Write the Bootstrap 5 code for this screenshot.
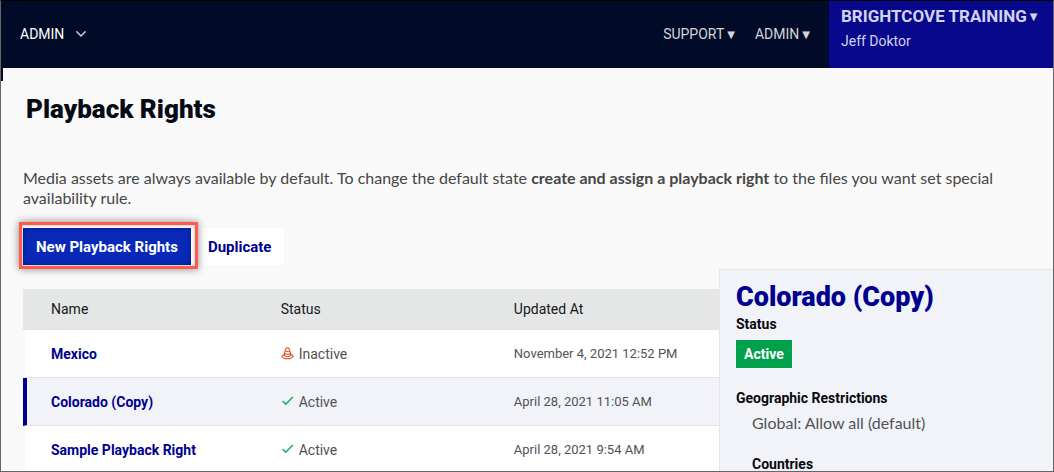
<!DOCTYPE html>
<html lang="en">
<head>
<meta charset="utf-8">
<meta name="viewport" content="width=device-width, initial-scale=1">
<title>Playback Rights</title>
<link href="https://cdn.jsdelivr.net/npm/bootstrap@5.3.0/dist/css/bootstrap.min.css" rel="stylesheet">
<style>
  :root { --navy: #010b27; --brand: #08088c; --link: #00008f; --panel: #f2f3f9; --line: #e3e4e8; }
  body { font-family: Roboto, "Liberation Sans", sans-serif; font-size: 14px; line-height: 20px; color: #505356; background: #f9f9f9; }
  .app-frame { height: 100vh; border: 1px solid #666; border-top-color: #000; }
  .topbar { background: var(--navy); height: 67px; margin: 0 -1px; }
  .menu-btn { background: none; border: 0; padding: 0 0 2px; color: #d3d5db; line-height: 20px; }
  .module-btn { color: #fff; margin-left: 20px; gap: 12px; }
  .top-links { gap: 20px; margin-right: 19px; }
  .caret { font-family: "DejaVu Sans", sans-serif; font-size: 10px; line-height: 10px; margin-left: 3px; vertical-align: 1px; }
  .account { width: 225px; background: var(--brand); padding: 5px 12px; color: #d3d3ee; }
  .account .menu-btn { font-size: 17px; color: #d3d3ee; }
  .account .caret { vertical-align: 2px; }
  .account-user { margin-top: 3px; }
  .rail-stub { width: 3px; height: 13px; margin-left: -1px; background: var(--navy); }
  .page-head { padding: 0 22px; margin-top: 12px; }
  .page-title { font-size: 26px; font-weight: 900; line-height: 32px; color: #050a14; margin: 0 0 43px 3px; }
  .intro { font-family: Lato, sans-serif; font-size: 16px; line-height: 20px; color: #464646; margin: 0 0 20px; }
  .act { border: 0; border-radius: 0; font-size: 15px; font-weight: 700; line-height: 20px; padding: 8px 13px; height: 37px; }
  .act-new { background: #0829b8; color: #fff; box-shadow: inset 0 0 5px #001a80; }
  .act-copy { background: #fff; color: var(--link); }
  .callout-box::after { content: ""; position: absolute; inset: -6px -7px -4px -4px; border: 3px solid #ff5a4c; box-shadow: 0 0 8px #0007, inset 0 0 3px #0005; pointer-events: none; }
  .rights-wrap { padding: 20px 0 0 22px; }
  .rights { width: 100%; border-collapse: separate; border-spacing: 0; table-layout: fixed; }
  .rights th { font-weight: 400; }
  .rights thead th:first-child { width: 33%; }
  .rights th, .rights td { padding: 0 28px; white-space: nowrap; }
  .rights thead th { height: 41px; background: #e5e7e6; color: #14171c; border-bottom: 1px solid var(--line); }
  .rights tbody tr { background: #fff; }
  .rights tbody th, .rights tbody td { height: 48px; border-bottom: 1px solid var(--line); }
  .rights tbody th { padding-left: 26px; border-left: 2px solid #f9f9f9; }
  .rights tbody tr.chosen { background: var(--panel); }
  .rights tbody tr.chosen th { padding-left: 24px; border-left: 4px solid var(--link); }
  .rights tbody td:last-child { font-size: 13px; }
  .rights a { color: var(--link); font-weight: 700; text-decoration: none; }
  .state { gap: 5px; }
  .detail { flex: 0 0 334px; background: var(--panel); border: 1px solid #e6e6ea; border-width: 1px 0 0 1px; padding: 10px 16px 0; color: #08090c; }
  .detail h2 { font-size: 27px; font-weight: 900; line-height: 34px; color: var(--link); margin: 0; }
  .detail h3 { font-size: 14px; font-weight: 700; line-height: 20px; margin: 0; }
  .state-tag { background: #00a04d; color: #fff; font-weight: 700; line-height: 20px; padding: 4px 8px; margin: 6px 0 20px; }
  .rule-text { font-family: Lato, sans-serif; font-size: 16px; color: #505356; margin: 5px 0 21px; }
</style>
</head>
<body>
<div class="app-frame d-flex flex-column overflow-hidden">
  <header class="topbar d-flex flex-shrink-0">
    <button type="button" class="menu-btn module-btn d-flex align-items-center">ADMIN
      <svg width="10" height="6" viewBox="0 0 10 6" fill="none" stroke="#d3d5db" stroke-width="1.4" stroke-linecap="round" stroke-linejoin="round" aria-hidden="true"><path d="M.8.8 5 5 9.200.8"/></svg>
    </button>
    <nav class="top-links d-flex align-items-center ms-auto" aria-label="Account">
      <button type="button" class="menu-btn">SUPPORT<span class="caret">▼</span></button>
      <button type="button" class="menu-btn">ADMIN<span class="caret">▼</span></button>
    </nav>
    <div class="account">
      <button type="button" class="menu-btn d-block fw-bold text-nowrap">BRIGHTCOVE TRAINING<span class="caret">▼</span></button>
      <div class="account-user">Jeff Doktor</div>
    </div>
  </header>
  <div class="rail-stub flex-shrink-0"></div>
  <main class="d-flex flex-column flex-grow-1">
    <section class="page-head">
      <h1 class="page-title">Playback Rights</h1>
      <p class="intro">Media assets are always available by default. To change the default state <strong>create and assign a playback right</strong> to the files you want set special availability rule.</p>
      <div class="d-flex mb-1">
        <div class="callout-box position-relative"><button type="button" class="act act-new">New Playback Rights</button></div>
        <button type="button" class="act act-copy ms-1">Duplicate</button>
      </div>
    </section>
    <div class="d-flex flex-grow-1">
      <div class="rights-wrap flex-grow-1">
        <table class="rights">
          <thead><tr><th scope="col">Name</th><th scope="col">Status</th><th scope="col">Updated At</th></tr></thead>
          <tbody>
            <tr>
              <th scope="row"><a href="#mexico">Mexico</a></th>
              <td><span class="state d-flex align-items-center"><svg width="13" height="13" viewBox="0 0 13 13" fill="none" stroke="#dc5427" stroke-width="1.1" stroke-linejoin="round" aria-hidden="true"><path d="M5.200 1.200Q6.500.200 7.800 1.200L10 7.300 12.200 9.300Q11 11.800 6.500 11.800T.8 9.300L3 7.300ZM4.300 3.900Q6.500 5.200 8.700 3.900M3.300 6.400Q6.500 8.200 9.700 6.400M3 7.700Q3.500 9.700 6.500 9.700T10 7.700"/></svg>Inactive</span></td>
              <td>November 4, 2021 12:52 PM</td>
            </tr>
            <tr class="chosen">
              <th scope="row"><a href="#colorado-copy">Colorado (Copy)</a></th>
              <td><span class="state d-flex align-items-center"><svg width="13" height="13" viewBox="0 0 13 13" fill="none" stroke="#18a45c" stroke-width="1.300" aria-hidden="true"><path d="M1.500 6 4.800 9.300 11.800 2"/></svg>Active</span></td>
              <td>April 28, 2021 11:05 AM</td>
            </tr>
            <tr>
              <th scope="row"><a href="#sample">Sample Playback Right</a></th>
              <td><span class="state d-flex align-items-center"><svg width="13" height="13" viewBox="0 0 13 13" fill="none" stroke="#18a45c" stroke-width="1.300" aria-hidden="true"><path d="M1.500 6 4.800 9.300 11.800 2"/></svg>Active</span></td>
              <td>April 28, 2021 9:54 AM</td>
            </tr>
          </tbody>
        </table>
      </div>
      <aside class="detail">
        <h2>Colorado (Copy)</h2>
        <h3>Status</h3>
        <span class="state-tag d-inline-block">Active</span>
        <h3>Geographic Restrictions</h3>
        <div class="ps-3">
          <p class="rule-text">Global: Allow all (default)</p>
          <h3>Countries</h3>
        </div>
      </aside>
    </div>
  </main>
</div>
<script src="https://cdn.jsdelivr.net/npm/bootstrap@5.3.0/dist/js/bootstrap.bundle.min.js"></script>
</body>
</html>
